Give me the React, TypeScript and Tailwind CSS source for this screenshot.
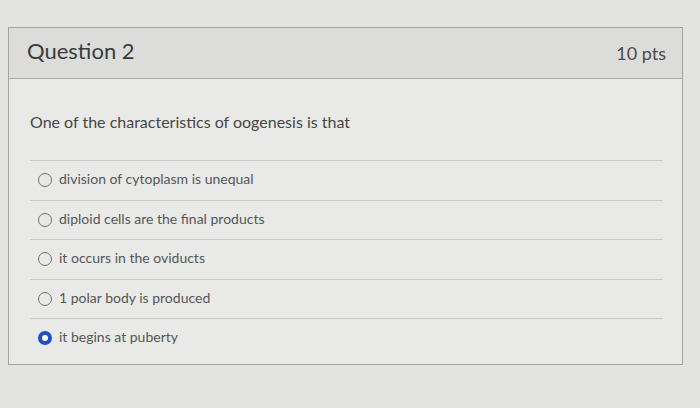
const options = [
  { label: 'division of cytoplasm is unequal', checked: false },
  { label: 'diploid cells are the final products', checked: false },
  { label: 'it occurs in the oviducts', checked: false },
  { label: '1 polar body is produced', checked: false },
  { label: 'it begins at puberty', checked: true },
];

function Radio({ checked }: { checked: boolean }) {
  if (checked) {
    return (
      <span className="w-[14px] h-[14px] rounded-full border-[4px] border-[#1d4fc9] bg-white shrink-0" />
    );
  }
  return <span className="w-[14px] h-[14px] rounded-full border-[1.5px] border-[#6f706f] bg-transparent shrink-0" />;
}

export default function App() {
  return (
    <div
      className="w-[700px] h-[408px] bg-[#e3e4e2] pt-[27px] pl-[8px] overflow-hidden"
      style={{ fontFamily: 'Lato, "Open Sans", sans-serif' }}
    >
      <div className="w-[675px] h-[338px] border border-[#a3a4a3] bg-[#e9eae8]">
        <div className="h-[51px] bg-[#dcdddb] border-b border-[#a9aaa9] flex items-center justify-between pl-[18px] pr-[16px]">
          <span className="text-[22px] text-[#3a3b3a] leading-none pb-[4px]">Question 2</span>
          <span className="text-[18px] text-[#4a4b4a] leading-none">10 pts</span>
        </div>
        <div className="pl-[21px] pr-[19px]">
          <p className="text-[16px] text-[#454645] leading-[20px] mt-[33px] mb-[28px]">
            One of the characteristics of oogenesis is that
          </p>
          <div>
            {options.map((o) => (
              <div
                key={o.label}
                className="h-[39.5px] border-t border-[#c9cac8] flex items-center gap-[7px] pl-[8px]"
              >
                <Radio checked={o.checked} />
                <span className="text-[14px] text-[#555655] leading-none pb-[2px]">{o.label}</span>
              </div>
            ))}
          </div>
        </div>
      </div>
    </div>
  );
}
